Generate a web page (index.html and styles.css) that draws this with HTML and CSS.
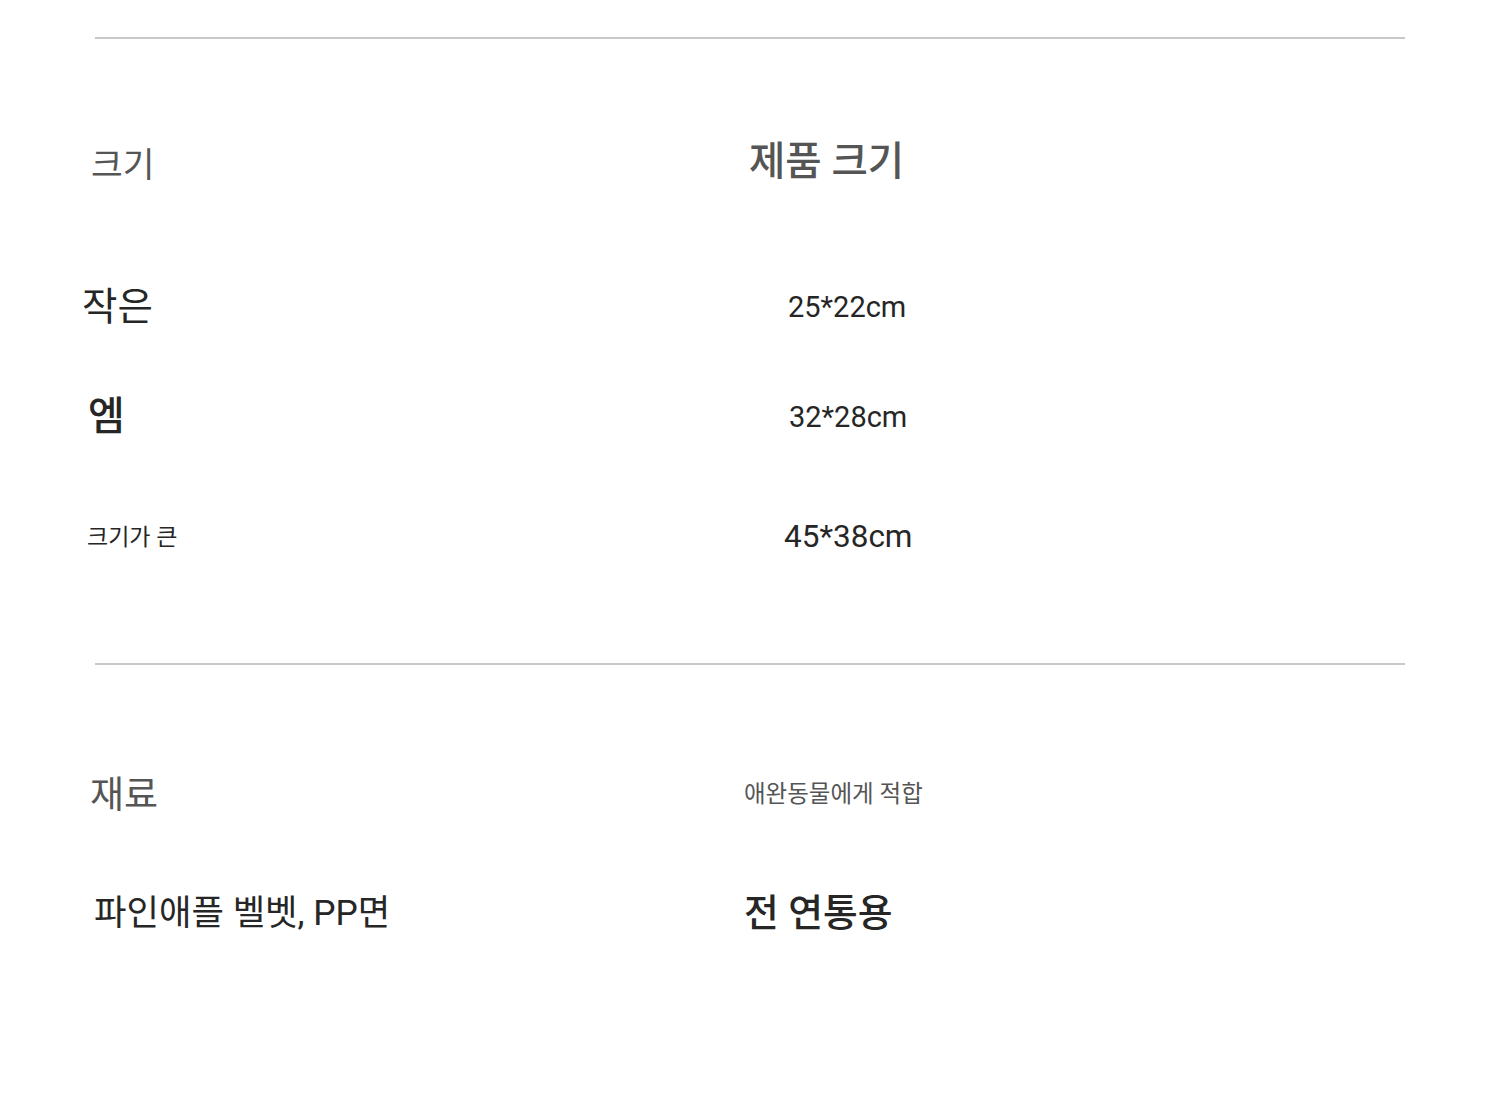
FILE: index.html
```html
<!DOCTYPE html>
<html lang="ko">
<head>
<meta charset="utf-8">
<link rel="stylesheet" href="styles.css">
</head>
<body>
<div class="page">
  <div class="rule rule-top"></div>
  <section class="spec spec-size">
    <div class="row r1">
      <div class="cell left"><span class="t label size-l">크기</span></div>
      <div class="cell right"><span class="t label prod">제품 크기</span></div>
    </div>
    <div class="row r2">
      <div class="cell left"><span class="t dark small">작은</span></div>
      <div class="cell right"><span class="t dark num n1">25*22cm</span></div>
    </div>
    <div class="row r3">
      <div class="cell left"><span class="t dark med">엠</span></div>
      <div class="cell right"><span class="t dark num n2">32*28cm</span></div>
    </div>
    <div class="row r4">
      <div class="cell left"><span class="t dark big">크기가 큰</span></div>
      <div class="cell right"><span class="t dark num n3">45*38cm</span></div>
    </div>
  </section>
  <div class="rule rule-mid"></div>
  <section class="spec spec-mat">
    <div class="row r5">
      <div class="cell left"><span class="t label mat">재료</span></div>
      <div class="cell right"><span class="t label pet">애완동물에게 적합</span></div>
    </div>
    <div class="row r6">
      <div class="cell left"><span class="t dark fabric">파인애플 벨벳, PP면</span></div>
      <div class="cell right"><span class="t dark season">전 연통용</span></div>
    </div>
  </section>
</div>
</body>
</html>
```

FILE: styles.css
```css
html, body {
  margin: 0;
  padding: 0;
  background: #ffffff;
}

body {
  font-family: Roboto, "Noto Sans CJK KR", sans-serif;
  width: 1500px;
  height: 1120px;
  overflow: hidden;
}

.page {
  padding-top: 37px;
}

.rule {
  margin: 0 95px;
  height: 2px;
  background: #c8c8c8;
}

.spec {
  display: flex;
  flex-direction: column;
}

.row {
  display: grid;
  grid-template-columns: 655px 1fr;
  height: 80px;
  align-items: center;
}

.cell {
  display: flex;
  align-items: center;
}

.right { padding-left: 95px; }

.t {
  line-height: 1;
  white-space: nowrap;
}

.label { color: #555555; }
.dark { color: #262626; }

/* vertical placement of rows */
.r1 { margin-top: 83px; }
.r2 { margin-top: 65px; }
.r3 { margin-top: 30px; }
.r4 { margin-top: 40px; }
.rule-mid { margin-top: 86px; }
.r5 { margin-top: 90px; }
.r6 { margin-top: 39px; }

/* horizontal placement & sizes */
.size-l { margin-left: 91px; margin-top: 6px; font-size: 34.5px; }
.prod { margin-left: -1px; font-size: 39.5px; font-weight: 500; }

.small { margin-left: 82px; font-size: 38.5px; }
.med { margin-left: 88px; font-size: 40px; font-weight: 500; }
.big { margin-left: 87px; font-size: 23px; }

.num { font-size: 29px; }
.n1 { margin-left: 38px; }
.n2 { margin-left: 39px; }
.n3 { margin-left: 34px; font-size: 31.5px; }

.mat { margin-left: 90px; font-size: 37px; }
.pet { margin-left: -6px; font-size: 23.5px; }
.fabric { margin-left: 94px; font-size: 35.3px; }
.season { margin-left: -6px; font-size: 37.8px; font-weight: 500; }
```
